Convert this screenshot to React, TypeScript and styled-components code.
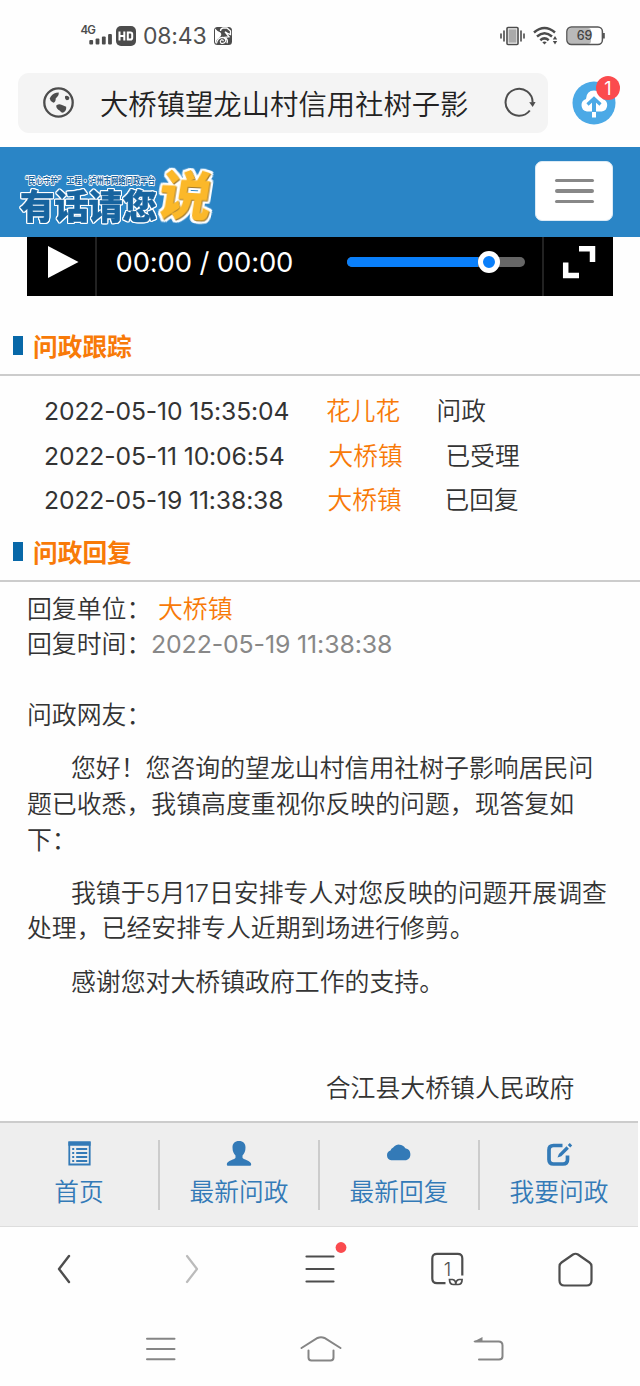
import React from 'react';
import styled, { createGlobalStyle } from 'styled-components';

const GlobalStyle = createGlobalStyle`
  * { box-sizing: border-box; }
  body {
    margin: 0;
    background: #fefefe;
    color: #333;
    font-family: Inter, "Noto Sans CJK SC", sans-serif;
    font-weight: 350;
  }
  svg { display: block; flex: none; overflow: visible; }
`;

const Screen = styled.div`
  width: 640px;
  height: 1386px;
  display: flex;
  flex-direction: column;
  overflow: hidden;
`;

const StatusBar = styled.header`
  height: 73px;
  padding: 0 35px 2px 81px;
  display: flex;
  align-items: center;
  justify-content: space-between;
`;

const StatusGroup = styled.div<{ $gap: number }>`
  display: flex;
  align-items: center;
  gap: ${(p) => p.$gap}px;
`;

const Clock = styled.span`
  width: 64px;
  font-size: 23px;
  line-height: 30px;
  font-weight: 400;
  letter-spacing: -0.2px;
  color: #505050;
  white-space: nowrap;
`;

const AddressRow = styled.div`
  height: 74px;
  padding: 0 24px 14px 18px;
  display: flex;
  align-items: center;
  justify-content: space-between;
`;

const AddressBar = styled.div`
  width: 530px;
  height: 60px;
  padding: 0 12px 0 25px;
  display: flex;
  align-items: center;
  border-radius: 11px;
  background: #f4f4f4;
`;

const AddressText = styled.span`
  flex: 1;
  margin-left: 25px;
  padding-top: 4px;
  font-size: 28.35px;
  line-height: 40px;
  font-weight: 350;
  color: #222;
  white-space: nowrap;
`;

const CloudButton = styled.div`
  position: relative;
  width: 44px;
  height: 44px;
`;

const Badge = styled.span`
  position: absolute;
  left: 24px;
  top: -5px;
  width: 24px;
  height: 24px;
  border-radius: 50%;
  background: #fb4b4e;
  color: #fff;
  font-size: 18px;
  font-weight: 400;
  line-height: 25px;
  text-align: center;
`;

const SiteHeader = styled.div`
  height: 90px;
  padding: 0 27px 0 18px;
  display: flex;
  align-items: center;
  justify-content: space-between;
  background: #2a85c6;
`;

const MenuButton = styled.button`
  width: 78px;
  height: 60px;
  margin-bottom: 2px;
  padding: 0;
  border: 1px solid #dbeaf5;
  border-radius: 7px;
  background: #fff;
  display: flex;
  flex-direction: column;
  align-items: center;
  justify-content: center;
  gap: 7px;
`;

const MenuLine = styled.span`
  width: 39px;
  height: 3.6px;
  border-radius: 2px;
  background: #888;
`;

const Player = styled.div`
  height: 58.5px;
  margin: 0 27px;
  display: flex;
  background: #000;
  color: #fff;
`;

const PlayCell = styled.div`
  width: 69.5px;
  padding: 9px 0 0 21px;
  border-right: 2px solid #222;
`;

const PlayTime = styled.span`
  width: 250px;
  padding-left: 19px;
  font-size: 27.4px;
  font-weight: 400;
  line-height: 50px;
  letter-spacing: -0.12px;
  white-space: nowrap;
`;

const Volume = styled.div`
  width: 178px;
  height: 10px;
  margin-top: 20px;
  display: flex;
  align-items: center;
  border-radius: 5px;
  background: #666;
`;

const VolumeFill = styled.span`
  width: 131px;
  height: 10px;
  border-radius: 5px 0 0 5px;
  background: #0a7ffa;
`;

const VolumeKnob = styled.span`
  width: 22px;
  height: 22px;
  flex: none;
  border: 5.5px solid #fff;
  border-radius: 50%;
  background: #0a7ffa;
`;

const FullscreenCell = styled.div`
  width: 71px;
  margin-left: auto;
  padding: 9px 0 0 19px;
  border-left: 2px solid #222;
`;

const SectionTitle = styled.h2<{ $top: number }>`
  margin: 0;
  padding: ${(p) => p.$top}px 0 9.5px 13px;
  display: flex;
  align-items: center;
  gap: 10px;
  border-bottom: 2px solid #ccc;
  font-size: 24.7px;
  line-height: 36px;
  font-weight: 700;
  color: #f87a08;

  &::before {
    content: '';
    width: 10px;
    height: 19px;
    margin-top: -3px;
    background: #0868a8;
  }
`;

const TrackList = styled.div`
  padding: 13px 0 0 44px;
`;

const TrackRow = styled.div<{ $cols: string }>`
  display: grid;
  grid-template-columns: ${(p) => p.$cols} 1fr;
  font-size: 24.7px;
  line-height: 44.5px;
  white-space: nowrap;
`;

const Stamp = styled.span<{ $muted?: boolean }>`
  font-weight: 380;
  letter-spacing: -0.12px;
  color: ${(p) => (p.$muted ? '#888' : 'inherit')};
`;

const Place = styled.span`
  color: #f87a08;
`;

const Reply = styled.article`
  padding: 9.5px 27px 0;
  font-size: 24.89px;
  line-height: 35.56px;
`;

const MetaLine = styled.div`
  display: flex;
  white-space: nowrap;
`;

const MetaLabel = styled.span<{ $w: number }>`
  width: ${(p) => p.$w}px;
`;

const Greeting = styled.p`
  margin: 35.5px 0 0;
`;

const Paragraph = styled.p`
  margin: 17.78px 0 0;
  text-indent: 44px;
`;

const Signature = styled.p`
  margin: 71.1px 38.5px 0 0;
  text-align: right;
`;

const TabBar = styled.nav`
  width: 638px;
  height: 106px;
  margin-top: auto;
  flex: none;
  padding-top: 17px;
  display: flex;
  border-top: 2px solid #ccc;
  border-bottom: 1px solid #ddd;
  background: #eee;
`;

const Tab = styled.div`
  width: 160px;
  height: 70px;
  display: flex;
  flex-direction: column;
  align-items: center;
  border-right: 2px solid #ccc;
  color: #337ab7;
  font-size: 24.7px;
  line-height: 36px;
  white-space: nowrap;

  &:last-child { border-right: 0; width: 158px; }

  span { margin-top: 7px; }
`;

const Toolbar = styled.nav`
  height: 85px;
  padding-bottom: 1px;
  flex: none;
  display: flex;
`;

const ToolCell = styled.div`
  width: 127.8px;
  display: flex;
  align-items: center;
  justify-content: center;
`;

const SystemNav = styled.nav`
  height: 74px;
  flex: none;
  padding: 0 136px 0 145px;
  display: grid;
  grid-template-columns: 155px 173px 31px;
  align-items: center;
`;

const Signal = () => (
  <svg width="32" height="22" viewBox="0 0 32 22" fill="#4c4c4c">
    <text x="-0.5" y="9" fontSize="11.5" fontWeight="600" letterSpacing="-0.8">4G</text>
    <rect x="8.3" y="15" width="3.8" height="4.5" rx="1" />
    <rect x="14.6" y="13.5" width="3.8" height="6" rx="1" />
    <rect x="20.9" y="11.5" width="3.8" height="8" rx="1" />
    <rect x="27.1" y="9" width="3.8" height="10.5" rx="1" />
  </svg>
);

const HdIcon = () => (
  <svg width="20" height="20" viewBox="0 0 20 20">
    <rect width="20" height="20" rx="5" fill="#4c4c4c" />
    <path d="M3.5 5.5v9M8.3 5.5v9M3.5 10h5M11.8 6.4h2.6q1.8 0 1.8 1.8v3.6q0 1.8-1.8 1.8H11.8z" fill="none" stroke="#fff" strokeWidth="2" />
  </svg>
);

const SquirrelIcon = () => (
  <svg width="18" height="18" viewBox="0 0 18 18">
    <rect width="18" height="18" rx="3.5" fill="#4c4c4c" />
    <path d="M1 1.5Q3.5 4.5 6.5 5.5Q8.500 8 5.5 10.5Q2 12.5 1.5 16.5L1 16z" fill="#fff" />
    <path d="M6.500 4q0-2.500 2.500-3h4l3.500 3v3.500l-3-1.200l-2.500-1.500l4 5l-4.500.5q4 2 2.500 6" fill="none" stroke="#fff" strokeWidth="1.3" />
    <path d="M2.500 16.500Q3.500 10.500 8.500 10.300q3.800.8 3.200 4q-1.500 3-4.700 1.800q-1.500-1.800.3-3.200q2-.4 2 1.400" fill="none" stroke="#fff" strokeWidth="1.2" />
  </svg>
);

const VibrateIcon = () => (
  <svg width="25" height="20" viewBox="0 0 25 20" fill="none" stroke="#4c4c4c" strokeWidth="1.6" strokeLinecap="round">
    <rect x="7" y="1.5" width="11" height="17" rx="1" />
    <rect x="8.5" y="3.3" width="8" height="13.4" fill="#aaa" stroke="none" />
    <path d="M4 5v10M1 8v4M21 5v10M24 8v4" />
  </svg>
);

const WifiIcon = () => (
  <svg width="25" height="20" viewBox="0 0 25 20" fill="none" stroke="#4c4c4c" strokeWidth="2.5">
    <path d="M1 6.500Q11.500-2.500 22 6.500M4 10.500q7.500-6.500 15 0M7.300 14.200q4.200-3.700 8.400 0" />
    <path d="M9.300 16.300q2.200-1.800 4.400 0L11.500 18.600zM22 10l2.200 3.500h-4.400zM22 18.500l2.200-3.500h-4.400z" fill="#4c4c4c" stroke="none" />
  </svg>
);

const BatteryIcon = () => (
  <svg width="39" height="20" viewBox="0 0 39 20">
    <rect x="2" y="2" width="23" height="16" rx="3" fill="#b9b9b9" />
    <rect x="0.9" y="0.9" width="35.5" height="17.6" rx="4.5" fill="none" stroke="#555" strokeWidth="1.5" />
    <path d="M37.8 7v5.5" stroke="#555" strokeWidth="2" />
    <text x="18.5" y="14.2" fontSize="12.5" fontWeight="500" textAnchor="middle" fill="#444">69</text>
  </svg>
);

const GlobeIcon = () => (
  <svg width="32" height="32" viewBox="0 0 32 32">
    <circle cx="15.5" cy="15.5" r="14.2" fill="none" stroke="#4d4d4d" strokeWidth="2.3" />
    <path d="M7.800 9.500Q10.500 5.500 15.800 5.400q.2 2.200-1.300 4l-1.800 2q.2 3.400-2.300 4.400Q7 14.200 6.700 11.500zM13.200 18.600q3-2.300 5.200-.8l4.800 1.900q.4 4.400-3.300 6.100q-2-.2-3-2.100q-3.700-1.600-3.700-5.100zM22.200 9q3-.8 4.300 1.700q-.3 2.500-2.700 2.500q-2.500-1.300-1.600-4.200z" fill="#4d4d4d" />
  </svg>
);

const ReloadIcon = () => (
  <svg width="32" height="30" viewBox="0 0 32 30">
    <path d="M25.800 22.500A13.500 13.500 0 1 1 28.600 14.500" fill="none" stroke="#4d4d4d" strokeWidth="2" />
    <path d="M25.200 14.200L31.600 14L28.700 19z" fill="#4d4d4d" />
  </svg>
);

const UploadIcon = () => (
  <svg width="44" height="44" viewBox="0 0 44 44">
    <circle cx="22" cy="22" r="21.5" fill="#4ba9e6" />
    <path d="M15 30.500q-5.500-1-5.500-6.500q0-4.500 4.500-6Q14.500 9.500 22 9.500t8.700 8.500q4.500 1.500 4.500 6q0 5.500-5.500 6.500z" fill="#fff" />
    <path d="M22 31V19" stroke="#4ba9e6" strokeWidth="4" />
    <path d="M22 36.500V31" stroke="#fff" strokeWidth="4" />
    <path d="M15.500 23.500L22 17.500l6.500 6" fill="none" stroke="#4ba9e6" strokeWidth="3.2" />
  </svg>
);

const LogoText = styled.text<{ $halo: number }>`
  filter: ${(p) =>
    [[1, 0], [-1, 0], [0, 1], [0, -1]]
      .map(([x, y]) => `drop-shadow(${x * p.$halo}px ${y * p.$halo}px 0 #fff)`)
      .join(' ')};
`;

const LogoAccent = styled.text`
  filter: drop-shadow(1px 1px 0 #a07a30) drop-shadow(2px 0 0 #fff) drop-shadow(-2px 0 0 #fff)
    drop-shadow(0 2px 0 #fff) drop-shadow(0 -2px 0 #fff);
`;

const Logo = () => (
  <svg width="196" height="60" viewBox="0 0 196 60" fontFamily='"Noto Sans CJK SC", sans-serif' strokeLinejoin="round">
    <text x="3" y="22" fontSize="9.6" fontWeight="700" fill="#17649f" stroke="#fff" strokeWidth="1.8" textLength="134" lengthAdjust="spacingAndGlyphs" paintOrder="stroke">“民心守护” 工程·泸州市网络问政平台</text>
    <LogoText $halo={1} x="2" y="57" fontSize="34.5" fontWeight="900" fill="#17649f" stroke="#17649f" strokeWidth="0.5" textLength="137" lengthAdjust="spacing">有话请您</LogoText>
    <LogoAccent x="0" y="0" transform="translate(138 52) rotate(3) skewX(-6)" fontSize="53.5" fontWeight="900" fill="#fbb829">说</LogoAccent>
  </svg>
);

const PlayIcon = () => (
  <svg width="31" height="33" viewBox="0 0 31 33"><path d="M0 0L30.500 16L0 32z" fill="#fff" /></svg>
);

const FullscreenIcon = () => (
  <svg width="32" height="33" viewBox="0 0 32 33" fill="none" stroke="#fff" strokeWidth="5.5">
    <path d="M16 2.700H29.500V16M2.700 16.500V29.500H16" />
  </svg>
);

const ListIcon = () => (
  <svg width="26" height="27" viewBox="0 0 26 27">
    <path d="M3.300 2.500h20.400v22H3.300z" fill="none" stroke="#337ab7" strokeWidth="1.8" />
    <path d="M2.400 1.600h22.200v4.200H2.400zM6.200 8h2v2h-2zM10.200 8h11v2h-11zM6.200 12h2v2h-2zM10.200 12h11v2h-11zM6.200 16h2v2h-2zM10.200 16h11v2h-11zM6.200 20h2v2h-2zM10.200 20h11v2h-11z" fill="#337ab7" />
  </svg>
);

const UserIcon = () => (
  <svg width="26" height="27" viewBox="0 0 26 27" fill="#337ab7">
    <path d="M13 1c4.200 0 6.500 2.500 6.500 6.500c0 4-1.300 6-3 8v2.200c0 1.500 8.700 2.800 8.700 6.500q0 1.600-1.200 1.600H2q-1.200 0-1.200-1.600c0-3.700 8.700-5 8.700-6.500V15.500c-1.700-2-3-4-3-8c0-4 2.300-6.500 6.500-6.500z" />
  </svg>
);

const CloudIcon = () => (
  <svg width="26" height="27" viewBox="0 0 26 27" fill="#337ab7">
    <path d="M5.200 20.200a5 5 0 0 1-.7-9.700a4.200 4.200 0 0 1 2.700-3A7.300 7.300 0 0 1 19.300 8.200a6.200 6.200 0 0 1 .8 12z" />
  </svg>
);

const EditIcon = () => (
  <svg width="26" height="27" viewBox="0 0 26 27" fill="none" stroke="#337ab7">
    <path d="M16.500 5.500H7.500Q3 5.500 3 10v9.500q0 4.500 4.500 4.500h9.500q4.500 0 4.500-4.500v-4" strokeWidth="3.7" />
    <path d="M11.500 17.500l1.400-3.600l7.600-7.600l2.400 2.400l-7.600 7.600zM21.800 5l2-2l2.400 2.400l-2 2z" fill="#337ab7" stroke="none" />
  </svg>
);

const BackIcon = () => (
  <svg width="14" height="30" viewBox="0 0 14 30"><path d="M12 2L2 15l10 13" fill="none" stroke="#4d4d4d" strokeWidth="2.4" strokeLinejoin="round" strokeLinecap="round" /></svg>
);

const ForwardIcon = () => (
  <svg width="14" height="30" viewBox="0 0 14 30"><path d="M2 2l10 13l-10 13" fill="none" stroke="#bbb" strokeWidth="2.2" strokeLinejoin="round" strokeLinecap="round" /></svg>
);

const ToolMenuIcon = () => (
  <svg width="30" height="30" viewBox="0 0 30 30">
    <path d="M2.500 2.500h27M2.500 15h27M2.500 27.500h27" stroke="#4d4d4d" strokeWidth="2.2" strokeLinecap="round" />
    <circle cx="37" cy="-6.5" r="5.4" fill="#fa4a4e" />
  </svg>
);

const WindowsIcon = () => (
  <svg width="33" height="33" viewBox="0 0 33 33" fill="none" stroke="#4d4d4d" strokeWidth="2.2">
    <path d="M31.300 22.500V5.500q0-4.700-4.700-4.700H6Q1.300.800 1.300 5.500v20q0 4.700 4.700 4.700H14.500" />
    <path d="M18.500 26.500h3q3.300.5 3.300 5h-2.300q-4 0-4-5zM31.100 26.500h-3q-3.300.5-3.300 5h2.300q4 0 4-5z" strokeWidth="1.7" />
    <text x="16.5" y="23" fontSize="19" fontWeight="350" textAnchor="middle" fill="#4d4d4d" stroke="none">1</text>
  </svg>
);

const HomeIcon = () => (
  <svg width="35" height="35" viewBox="0 0 35 35">
    <path d="M15 2.500q2.500-1.500 5 0l11.500 8q2 1.400 2 4V28.500q0 5-5 5h-22q-5 0-5-5V14.500q0-2.600 2-4z" fill="none" stroke="#4d4d4d" strokeWidth="2.2" />
  </svg>
);

const RecentsIcon = () => (
  <svg width="31" height="24" viewBox="0 0 31 24"><path d="M2 1.800h27.500M2 12h27.500M2 22.200h27.500" stroke="#858585" strokeWidth="2" strokeLinecap="round" /></svg>
);

const SystemHomeIcon = () => (
  <svg width="42" height="26" viewBox="0 0 42 26" fill="none" stroke="#858585" strokeWidth="2" strokeLinecap="round">
    <path d="M1.500 12L17.500 2q3.500-1.700 7 0l16 10M8.500 14.500v7q0 3 3 3h19q3 0 3-3v-7" />
  </svg>
);

const SystemBackIcon = () => (
  <svg width="31" height="24" viewBox="0 0 31 24" fill="none" stroke="#858585" strokeWidth="2">
    <path d="M2 4.600h23.500q4 0 4 4v10.600q0 3.400-3.500 3.400H6" strokeLinecap="round" />
    <path d="M0 5L9.500 0v5z" fill="#858585" stroke="none" />
  </svg>
);

const track = [
  { time: '2022-05-10 15:35:04', who: '花儿花', state: '问政', cols: '282px 110.5px' },
  { time: '2022-05-11 10:06:54', who: '大桥镇', state: '已受理', cols: '284.5px 117px' },
  { time: '2022-05-19 11:38:38', who: '大桥镇', state: '已回复', cols: '283.5px 117px' },
];

const tabs = [
  { label: '首页', Icon: ListIcon },
  { label: '最新问政', Icon: UserIcon },
  { label: '最新回复', Icon: CloudIcon },
  { label: '我要问政', Icon: EditIcon },
];

const tools = [BackIcon, ForwardIcon, ToolMenuIcon, WindowsIcon, HomeIcon];

export default function App() {
  return (
    <Screen>
      <GlobalStyle />
      <StatusBar>
        <StatusGroup $gap={7}>
          <StatusGroup $gap={3}>
            <Signal />
            <HdIcon />
          </StatusGroup>
          <Clock>08:43</Clock>
          <SquirrelIcon />
        </StatusGroup>
        <StatusGroup $gap={8}>
          <VibrateIcon />
          <WifiIcon />
          <BatteryIcon />
        </StatusGroup>
      </StatusBar>

      <AddressRow>
        <AddressBar>
          <GlobeIcon />
          <AddressText>大桥镇望龙山村信用社树子影</AddressText>
          <ReloadIcon />
        </AddressBar>
        <CloudButton>
          <UploadIcon />
          <Badge>1</Badge>
        </CloudButton>
      </AddressRow>

      <SiteHeader>
        <Logo />
        <MenuButton aria-label="菜单">
          <MenuLine />
          <MenuLine />
          <MenuLine />
        </MenuButton>
      </SiteHeader>

      <Player>
        <PlayCell><PlayIcon /></PlayCell>
        <PlayTime>00:00 / 00:00</PlayTime>
        <Volume>
          <VolumeFill />
          <VolumeKnob />
        </Volume>
        <FullscreenCell><FullscreenIcon /></FullscreenCell>
      </Player>

      <SectionTitle $top={33}>问政跟踪</SectionTitle>
      <TrackList>
        {track.map((t) => (
          <TrackRow key={t.time} $cols={t.cols}>
            <Stamp>{t.time}</Stamp>
            <Place>{t.who}</Place>
            <span>{t.state}</span>
          </TrackRow>
        ))}
      </TrackList>

      <SectionTitle $top={12}>问政回复</SectionTitle>
      <Reply>
        <MetaLine>
          <MetaLabel $w={131}>回复单位：</MetaLabel>
          <Place>大桥镇</Place>
        </MetaLine>
        <MetaLine>
          <MetaLabel $w={124}>回复时间：</MetaLabel>
          <Stamp $muted>2022-05-19 11:38:38</Stamp>
        </MetaLine>
        <Greeting>问政网友：</Greeting>
        <Paragraph>您好！您咨询的望龙山村信用社树子影响居民问题已收悉，我镇高度重视你反映的问题，现答复如下：</Paragraph>
        <Paragraph>我镇于5月17日安排专人对您反映的问题开展调查处理，已经安排专人近期到场进行修剪。</Paragraph>
        <Paragraph>感谢您对大桥镇政府工作的支持。</Paragraph>
        <Signature>合江县大桥镇人民政府</Signature>
      </Reply>

      <TabBar>
        {tabs.map(({ label, Icon }) => (
          <Tab key={label}>
            <Icon />
            <span>{label}</span>
          </Tab>
        ))}
      </TabBar>

      <Toolbar>
        {tools.map((Icon, i) => (
          <ToolCell key={i}><Icon /></ToolCell>
        ))}
      </Toolbar>

      <SystemNav>
        <RecentsIcon />
        <SystemHomeIcon />
        <SystemBackIcon />
      </SystemNav>
    </Screen>
  );
}
